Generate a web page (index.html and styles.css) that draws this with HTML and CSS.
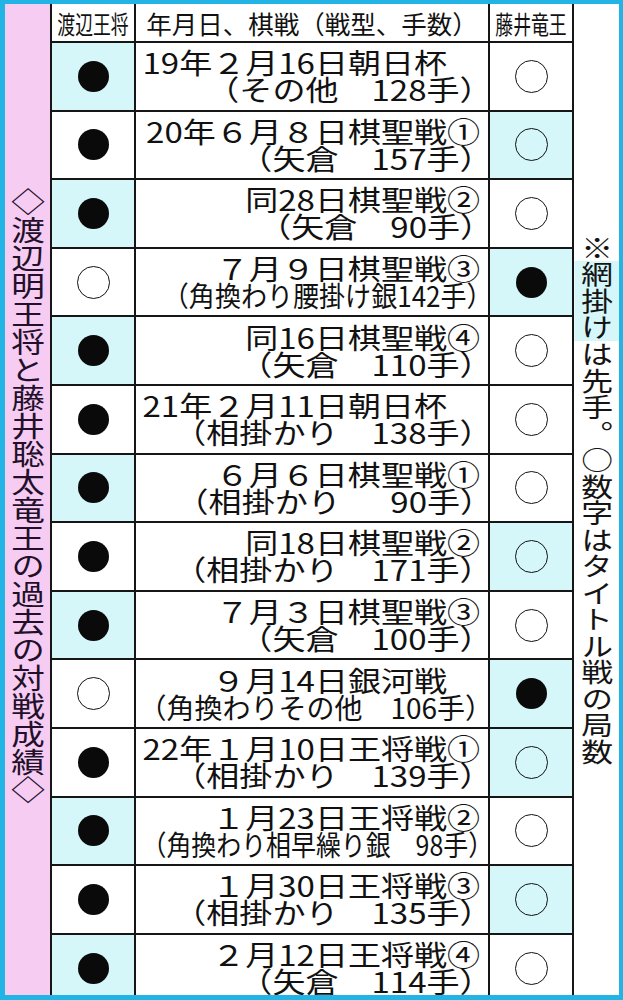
FILE: index.html
```html
<!DOCTYPE html>
<html lang="ja">
<head>
<meta charset="utf-8">
<title>渡辺明王将と藤井聡太竜王の過去の対戦成績</title>
<link rel="stylesheet" href="styles.css">
</head>
<body>
<div class="frame">
  <div class="title"><span class="vtext">◇渡辺明王将と藤井聡太竜王の過去の対戦成績◇</span></div>
  <div class="table">
    <div class="row head">
      <div class="c side"><span class="narrow">渡辺王将</span></div>
      <div class="c mid">年月日、棋戦（戦型、手数）</div>
      <div class="c side last"><span class="narrow">藤井竜王</span></div>
    </div>
    <div class="row">
      <div class="c side shade"><i class="dot"></i></div>
      <div class="c mid"><span class="l1">19年２月16日朝日杯　</span><span class="l2">（その他　128手）</span></div>
      <div class="c side last"><i class="ring"></i></div>
    </div>
    <div class="row">
      <div class="c side"><i class="dot"></i></div>
      <div class="c mid"><span class="l1">20年６月８日棋聖戦①</span><span class="l2">（矢倉　157手）</span></div>
      <div class="c side last shade"><i class="ring"></i></div>
    </div>
    <div class="row">
      <div class="c side shade"><i class="dot"></i></div>
      <div class="c mid"><span class="l1">同28日棋聖戦②</span><span class="l2">（矢倉　90手）</span></div>
      <div class="c side last"><i class="ring"></i></div>
    </div>
    <div class="row">
      <div class="c side"><i class="ring"></i></div>
      <div class="c mid"><span class="l1">７月９日棋聖戦③</span><span class="l2 w93">（角換わり腰掛け銀142手）</span></div>
      <div class="c side last shade"><i class="dot"></i></div>
    </div>
    <div class="row">
      <div class="c side shade"><i class="dot"></i></div>
      <div class="c mid"><span class="l1">同16日棋聖戦④</span><span class="l2">（矢倉　110手）</span></div>
      <div class="c side last"><i class="ring"></i></div>
    </div>
    <div class="row">
      <div class="c side"><i class="dot"></i></div>
      <div class="c mid"><span class="l1">21年２月11日朝日杯　</span><span class="l2">（相掛かり　138手）</span></div>
      <div class="c side last"><i class="ring"></i></div>
    </div>
    <div class="row">
      <div class="c side shade"><i class="dot"></i></div>
      <div class="c mid"><span class="l1">６月６日棋聖戦①</span><span class="l2">（相掛かり　&ensp;90手）</span></div>
      <div class="c side last"><i class="ring"></i></div>
    </div>
    <div class="row">
      <div class="c side"><i class="dot"></i></div>
      <div class="c mid"><span class="l1">同18日棋聖戦②</span><span class="l2">（相掛かり　171手）</span></div>
      <div class="c side last shade"><i class="ring"></i></div>
    </div>
    <div class="row">
      <div class="c side shade"><i class="dot"></i></div>
      <div class="c mid"><span class="l1">７月３日棋聖戦③</span><span class="l2">（矢倉　100手）</span></div>
      <div class="c side last"><i class="ring"></i></div>
    </div>
    <div class="row">
      <div class="c side"><i class="ring"></i></div>
      <div class="c mid"><span class="l1">９月14日銀河戦　</span><span class="l2 w100">（角換わりその他　106手）</span></div>
      <div class="c side last shade"><i class="dot"></i></div>
    </div>
    <div class="row">
      <div class="c side"><i class="dot"></i></div>
      <div class="c mid"><span class="l1">22年１月10日王将戦①</span><span class="l2">（相掛かり　139手）</span></div>
      <div class="c side last shade"><i class="ring"></i></div>
    </div>
    <div class="row">
      <div class="c side shade"><i class="dot"></i></div>
      <div class="c mid"><span class="l1">１月23日王将戦②</span><span class="l2 w89">（角換わり相早繰り銀　98手）</span></div>
      <div class="c side last"><i class="ring"></i></div>
    </div>
    <div class="row">
      <div class="c side"><i class="dot"></i></div>
      <div class="c mid"><span class="l1">１月30日王将戦③</span><span class="l2">（相掛かり　135手）</span></div>
      <div class="c side last shade"><i class="ring"></i></div>
    </div>
    <div class="row">
      <div class="c side shade"><i class="dot"></i></div>
      <div class="c mid"><span class="l1">２月12日王将戦④</span><span class="l2">（矢倉　114手）</span></div>
      <div class="c side last"><i class="ring"></i></div>
    </div>
  </div>
  <div class="note"><span class="vtext">※<span class="mesh">網掛け</span>は先手。○数字はタイトル戦の局数</span></div>
</div>
</body>
</html>
```
FILE: styles.css
```css
html, body {
  margin: 0;
  padding: 0;
}
body {
  width: 623px;
  height: 1000px;
  overflow: hidden;
  background: #22b4e4;
  font-family: "Noto Sans CJK JP", "Noto Sans", sans-serif;
  color: #111;
}
.frame {
  display: flex;
  margin: 4px 4px 0 5px;
  height: 991px;
  overflow: hidden;
  background: #fff;
}
.title {
  width: 45px;
  flex: none;
  background: #f6ccf2;
  display: flex;
  align-items: center;
  justify-content: center;
}
.title .vtext {
  writing-mode: vertical-rl;
  font-size: 28px;
  line-height: 1;
  color: #22102a;
  transform: scaleX(1.2) translateY(-4px);
  white-space: nowrap;
}
.table {
  width: 524px;
  flex: none;
  display: grid;
  grid-template-rows: 37px repeat(14, 68.6px);
}
.row {
  display: grid;
  grid-template-columns: 84px 354px 86px;
  box-sizing: border-box;
  border-top: 2px solid #161616;
}
.row.head {
  border-top: none;
}
.c {
  box-sizing: border-box;
  border-left: 2px solid #161616;
  display: flex;
  align-items: center;
  justify-content: center;
  background: #fff;
}
.c.last {
  border-right: 2px solid #161616;
}
.c.shade {
  background: #d5f7fa;
}
.head .c {
  font-size: 25.5px;
  line-height: 1;
}
.narrow {
  display: inline-block;
  transform: scaleX(0.7);
  white-space: nowrap;
}
.mid {
  white-space: nowrap;
}
.row:not(.head) .mid {
  flex-direction: column;
  align-items: flex-end;
  justify-content: center;
  padding-right: 8px;
  font-size: 28px;
  line-height: 27px;
}
.l1, .l2 {
  display: block;
  transform: scaleX(1.18);
  transform-origin: right center;
}
.l2 {
  margin-right: -13px;
}
.l2.w100 {
  transform: scaleX(1.0);
}
.l2.w93 {
  transform: scaleX(0.93);
}
.l2.w89 {
  transform: scaleX(0.89);
}
.dot {
  display: block;
  width: 31px;
  height: 31px;
  border-radius: 50%;
  background: #0a0a0a;
}
.ring {
  display: block;
  width: 33px;
  height: 33px;
  box-sizing: border-box;
  border-radius: 50%;
  border: 1.3px solid #111;
}
.note {
  width: 45px;
  flex: none;
  background: #fff;
  display: flex;
  align-items: center;
  justify-content: center;
}
.note .vtext {
  writing-mode: vertical-rl;
  font-size: 26.5px;
  line-height: 1;
  color: #141414;
  transform: scaleX(1.2);
  white-space: nowrap;
}
.mesh {
  background: #d5f7fa;
}
```
